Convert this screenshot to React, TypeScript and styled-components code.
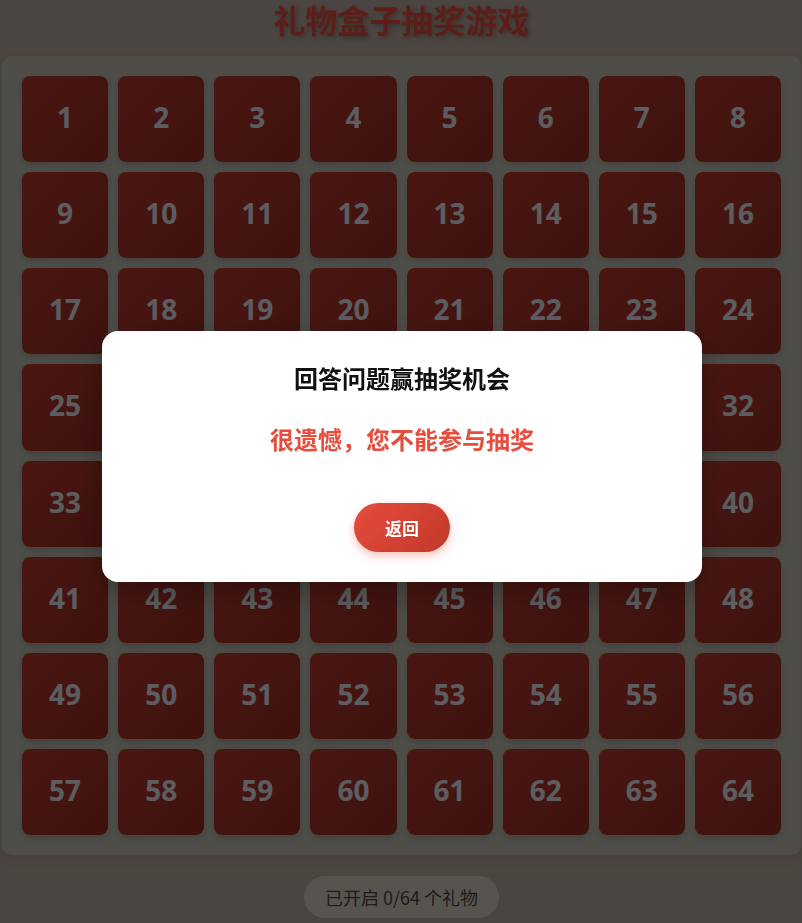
import React from "react";
import styled, { createGlobalStyle } from "styled-components";

const Global = createGlobalStyle`
  html, body { margin: 0; padding: 0; }
  body {
    background: #b9aca0;
    font-family: "Open Sans", "Noto Sans CJK SC", sans-serif;
    overflow: hidden;
  }
`;

const Page = styled.div`
  display: flex;
  flex-direction: column;
  align-items: stretch;
  padding: 0 1px 0 2px;
`;

const Title = styled.h1`
  margin: 0 0 18px;
  text-align: center;
  font-family: "Noto Sans CJK SC", sans-serif;
  font-size: 32px;
  line-height: 38px;
  font-weight: 700;
  color: #e74c3c;
  text-shadow: 2px 2px 4px rgba(0, 0, 0, 0.25);
`;

const Board = styled.div`
  display: grid;
  grid-template-columns: repeat(8, 1fr);
  gap: 10px;
  padding: 20px;
  background: #c3c0b4;
  border-radius: 10px;
  box-shadow: 0 4px 12px rgba(0, 0, 0, 0.08);
`;

const Cell = styled.div`
  aspect-ratio: 1 / 1;
  box-sizing: border-box;
  padding-bottom: 4px;
  display: flex;
  align-items: center;
  justify-content: center;
  border-radius: 8px;
  background: linear-gradient(135deg, #bb3a2e, #9a2d24);
  box-shadow: 0 3px 6px rgba(0, 0, 0, 0.15);
  color: #e6e8f0;
  font-family: "Open Sans", "Noto Sans CJK SC", sans-serif;
  font-size: 28px;
  font-weight: 700;
`;

const Footer = styled.div`
  display: flex;
  justify-content: center;
  margin-top: 21px;
`;

const Counter = styled.div`
  padding: 10px 21px;
  border-radius: 21px;
  background: #dad2c8;
  color: #4a4744;
  font-family: "Noto Sans CJK SC", sans-serif;
  font-size: 18px;
  line-height: 22px;
`;

const Overlay = styled.div`
  position: fixed;
  inset: 0;
  background: rgba(0, 0, 0, 0.6);
  display: flex;
  align-items: center;
  justify-content: center;
  padding-bottom: 10px;
  padding-left: 2px;
`;

const Modal = styled.div`
  width: 600px;
  box-sizing: border-box;
  padding: 30px;
  background: #ffffff;
  border-radius: 16px;
  box-shadow: 0 10px 30px rgba(0, 0, 0, 0.3);
  display: flex;
  flex-direction: column;
  align-items: center;
  font-family: "Noto Sans CJK SC", sans-serif;
`;

const ModalTitle = styled.h2`
  margin: 0 0 27px;
  font-size: 24px;
  line-height: 34px;
  font-weight: 700;
  color: #111;
`;

const Message = styled.p`
  margin: 0 0 47px;
  font-size: 24px;
  line-height: 34px;
  font-weight: 700;
  color: #e74c3c;
`;

const BackButton = styled.button`
  border: none;
  border-radius: 25px;
  padding: 14px 31px;
  background: linear-gradient(135deg, #e74c3c, #c0392b);
  color: #fff;
  font-family: "Noto Sans CJK SC", sans-serif;
  font-size: 17px;
  line-height: 21px;
  font-weight: 700;
  box-shadow: 0 4px 10px rgba(231, 76, 60, 0.35);
  cursor: pointer;
`;

export default function App() {
  const cells = Array.from({ length: 64 }, (_, i) => i + 1);
  return (
    <>
      <Global />
      <Page>
        <Title>礼物盒子抽奖游戏</Title>
        <Board>
          {cells.map((n) => (
            <Cell key={n}>{n}</Cell>
          ))}
        </Board>
        <Footer>
          <Counter>已开启 0/64 个礼物</Counter>
        </Footer>
      </Page>
      <Overlay>
        <Modal>
          <ModalTitle>回答问题赢抽奖机会</ModalTitle>
          <Message>很遗憾，您不能参与抽奖</Message>
          <BackButton>返回</BackButton>
        </Modal>
      </Overlay>
    </>
  );
}
